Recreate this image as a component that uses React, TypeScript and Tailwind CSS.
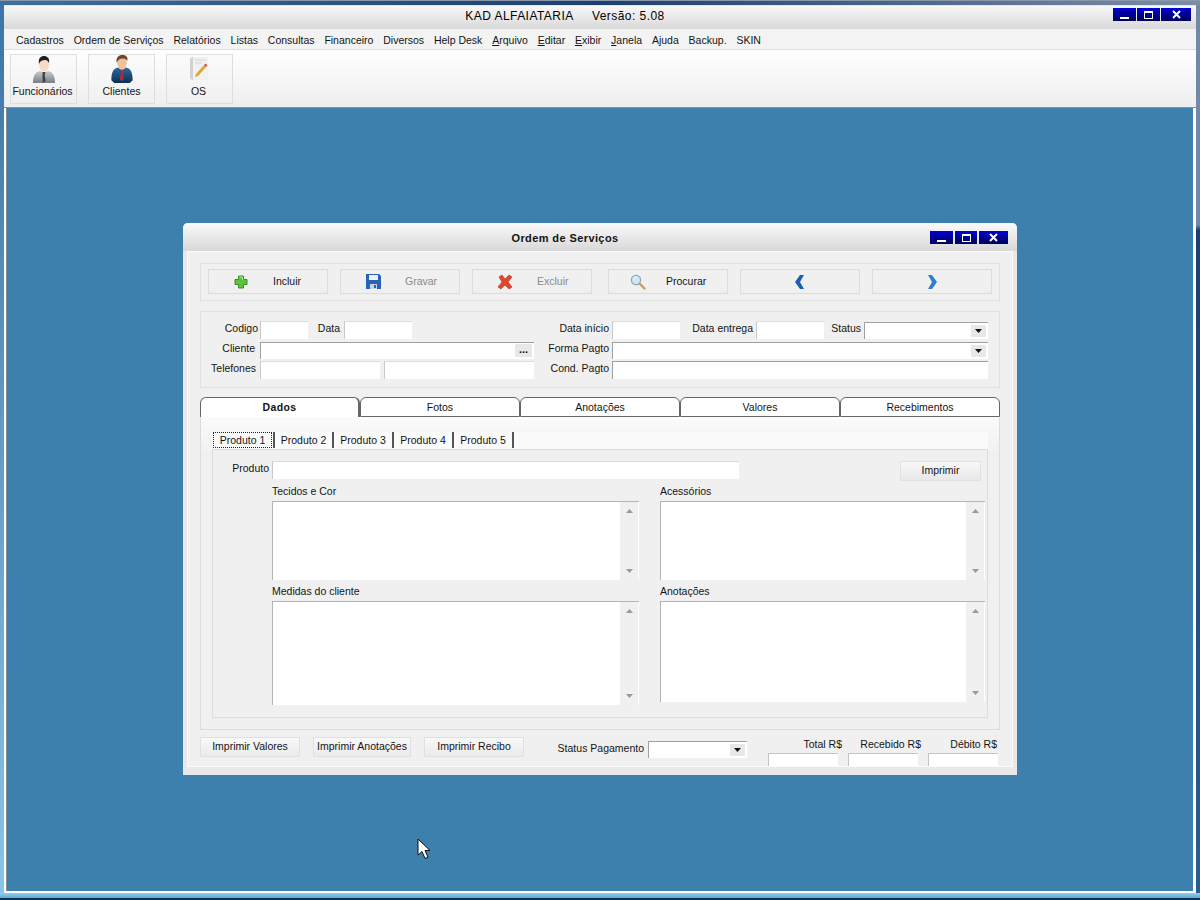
import React from 'react';

const FONT = "font-['Liberation_Sans',Arial,sans-serif]";

const WinButtons = ({ small }: { small?: boolean }) => (
  <div className={small ? 'flex gap-[2px]' : 'flex gap-[1px]'}>
    <div className="w-[23px] h-[13px] bg-gradient-to-b from-[#0000d8] to-[#000058] flex items-end justify-center pb-[2px]">
      <div className="w-[9px] h-[2px] bg-white"></div>
    </div>
    <div className={`${small ? 'w-[22px]' : 'w-[23px]'} h-[13px] bg-gradient-to-b from-[#0000d8] to-[#000058] flex items-center justify-center`}>
      <div className="w-[9px] h-[8px] border border-white border-t-2"></div>
    </div>
    <div className={`${small ? 'w-[29px]' : 'w-[30px]'} h-[13px] bg-gradient-to-b from-[#0000d8] to-[#000058] flex items-center justify-center`}>
      <svg width="9" height="9" viewBox="0 0 9 9"><path d="M1 1l7 7M8 1L1 8" stroke="#fff" strokeWidth="2" /></svg>
    </div>
  </div>
);

const PersonGrey = () => (
  <svg width="22" height="28" viewBox="0 0 22 28">
    <defs>
      <linearGradient id="suitg" x1="0" y1="0" x2="0" y2="1"><stop offset="0" stopColor="#c8cccc" /><stop offset="1" stopColor="#7b7f80" /></linearGradient>
    </defs>
    <path d="M0 27c0-7 2-11 7-12l4 2 4-2c5 1 7 5 7 12z" fill="url(#suitg)" />
    <path d="M9.500 16h3l-.8 3 1 6-3 2-.2-8z" fill="#3d4448" />
    <ellipse cx="11" cy="8.500" rx="5" ry="7" fill="#fbd9c4" />
    <path d="M6 8C5 2 8 0 11 0c3 0 6 2 5 7-1-2-2-3-4-3-3 0-5 1-6 4z" fill="#22211f" />
  </svg>
);

const PersonBlue = () => (
  <svg width="22" height="29" viewBox="0 0 22 30">
    <defs>
      <linearGradient id="suitb" x1="0" y1="0" x2="0" y2="1"><stop offset="0" stopColor="#2a6a9e" /><stop offset="1" stopColor="#0d2f55" /></linearGradient>
    </defs>
    <path d="M0 26c0-8 2-12 7-13l4 3 4-3c5 1 7 5 7 13l-3 3H3z" fill="url(#suitb)" />
    <path d="M9.500 15h3l-.8 3 1 7-2 2-1.800-2 1-7z" fill="#b8263c" />
    <ellipse cx="11" cy="8" rx="5" ry="6.500" fill="#f0c09a" />
    <path d="M5.500 8C4.500 2 8 0 11 0c4 0 6.500 2 5.500 6-1-2-3-2.500-5-2.500-3 0-4.500 1.500-6 4.500z" fill="#6e4526" />
  </svg>
);

const NoteIcon = () => (
  <svg width="19" height="25" viewBox="0 0 19 25">
    <path d="M0 3l2-2h16v23H2l-2-2z" fill="#d2d2d0" />
    <path d="M3 1h15v23H3z" fill="#f1f1ef" />
    <path d="M5 4h11M5 7h7" stroke="#d5d5d5" strokeWidth="1" />
    <path d="M6 18l8-9 2 2-8 9-3 1z" fill="#e2a23a" />
    <path d="M14 9l1.500-1.500 2 2L16 11z" fill="#c8582f" />
  </svg>
);

const PlusIcon = () => (
  <svg width="14" height="14" viewBox="0 0 14 14">
    <path d="M4.500 1h5v3.500h3.500v5H9.500V13h-5V9.500H1v-5h3.500z" fill="#5cc43c" stroke="#3a8f2a" strokeWidth="1" />
    <path d="M5.500 2h3v3" fill="none" stroke="#a8ec88" strokeWidth="1" />
  </svg>
);

const SaveIcon = () => (
  <svg width="15" height="15" viewBox="0 0 15 15">
    <path d="M0 0h13l2 2v13H0z" fill="#2a62b8" />
    <path d="M3 1h9v5H3z" fill="#eef2f8" />
    <path d="M4 10h7v5H4z" fill="#c9d3e4" />
    <path d="M8 11h2v3H8z" fill="#2a62b8" />
  </svg>
);

const XIcon = () => (
  <svg width="16" height="16" viewBox="0 0 16 16">
    <path d="M2 3l3-2 3 4 4-4 3 2-4 5 4 5-3 2-4-4-4 4-3-2 4-5z" fill="#e2452e" stroke="#b52f1c" strokeWidth="0.6" />
  </svg>
);

const SearchIcon = () => (
  <svg width="16" height="16" viewBox="0 0 16 16">
    <path d="M9.500 9.500l5 5" stroke="#cf9a55" strokeWidth="2.400" strokeLinecap="round" />
    <circle cx="6" cy="6" r="4.600" fill="#cfe6f5" stroke="#8fa9ba" strokeWidth="1.300" />
    <path d="M3.500 5.500c.5-1.500 1.500-2 3-2" stroke="#fff" strokeWidth="1" fill="none" />
  </svg>
);

const Chevron = ({ right }: { right?: boolean }) => (
  <svg width="12" height="14" viewBox="0 0 12 14">
    <path d={right ? 'M2 0h4l5 7-5 7H2l4-7z' : 'M10 0H6L1 7l5 7h4L6 7z'} fill={right ? '#2f7fd0' : '#1a5fb4'} />
  </svg>
);

const ToolButton = ({ label, children, iconClass, labelClass }: { label: string; children: React.ReactNode; iconClass?: string; labelClass?: string }) => (
  <div className="w-[67px] h-[50px] border border-[#dedede] bg-gradient-to-b from-[#fbfbfb] to-[#f0f0f0] flex flex-col items-center">
    <div className={`h-[29px] flex items-end justify-center ${iconClass ?? ''}`}>{children}</div>
    <div className={`leading-[14px] whitespace-nowrap ${labelClass ?? ''}`}>{label}</div>
  </div>
);

const ActionButton = ({ label, disabled, icon, iconClass, labelClass }: { label?: string; disabled?: boolean; icon: React.ReactNode; iconClass?: string; labelClass?: string }) => (
  <div className="w-[120px] h-[25px] border border-[#dcdcdc] bg-[#f0f0f0] flex items-center">
    {label ? (
      <>
        <div className={iconClass}>{icon}</div>
        <span className={`${labelClass} ${disabled ? 'text-[#8a8a8a]' : ''}`}>{label}</span>
      </>
    ) : (
      <div className="w-full flex justify-center">{icon}</div>
    )}
  </div>
);

const Label = ({ text, className }: { text: string; className: string }) => (
  <div className={`${className} text-right whitespace-nowrap leading-[14px] mt-[-5px]`}>{text}</div>
);

const Input = ({ className, dark }: { className: string; dark?: boolean }) => (
  <div className={`${className} h-[18px] bg-white border-l ${dark ? 'border-t border-[#a0a0a0]' : 'border-l-[#c8c8c8] border-t border-t-[#dcdcdc]'}`}></div>
);

const Combo = ({ className }: { className: string }) => (
  <div className={`${className} h-[17px] bg-white border-t border-l border-[#a0a0a0] flex items-center justify-end pr-[2px]`}>
    <div className="w-[15px] h-[12px] bg-[#e8e8e8] flex items-center justify-center">
      <svg width="7" height="4" viewBox="0 0 7 4"><path d="M0 0h7L3.500 4z" fill="#111" /></svg>
    </div>
  </div>
);

const Scrollbar = () => (
  <div className="w-[18px] h-full bg-[#f0f0f0] flex flex-col justify-between items-center py-[7px]">
    <svg width="7" height="4" viewBox="0 0 7 4"><path d="M0 4h7L3.500 0z" fill="#999" /></svg>
    <svg width="7" height="4" viewBox="0 0 7 4"><path d="M0 0h7L3.500 4z" fill="#999" /></svg>
  </div>
);

const Memo = ({ className }: { className: string }) => (
  <div className={`${className} bg-white border-t border-l border-[#b4b4b4] flex justify-end pr-[1px]`}>
    <Scrollbar />
  </div>
);

const MainTab = ({ label, active }: { label: string; active?: boolean }) => (
  <div className={`w-[160px] h-[20px] rounded-t-[6px] border-t border-r border-l flex items-center justify-center pt-[1px] ${active ? 'border-[#666] border-r-2 bg-white font-bold tracking-[0.4px]' : 'border-[#666] border-b bg-white'}`}>
    {label}
  </div>
);

const SubTab = ({ label, className }: { label: string; className: string }) => (
  <div className={`${className} h-[16px] border-r-2 border-[#555] flex items-center justify-center leading-[14px]`}>{label}</div>
);

const menus: [string, string][] = [
  ['', 'Cadastros'],
  ['', 'Ordem de Serviços'],
  ['', 'Relatórios'],
  ['', 'Listas'],
  ['', 'Consultas'],
  ['', 'Financeiro'],
  ['', 'Diversos'],
  ['', 'Help Desk'],
  ['A', 'rquivo'],
  ['E', 'ditar'],
  ['E', 'xibir'],
  ['J', 'anela'],
  ['', 'Ajuda'],
  ['', 'Backup.'],
  ['', 'SKIN'],
];

const OrdemWindow = () => (
  <div className="absolute left-[176px] top-[115px] w-[834px] h-[552px] rounded-t-[5px] bg-[#e8e8e8] overflow-hidden flex flex-col">
    <div className="h-[28px] shrink-0 relative bg-gradient-to-b from-[#fafafa] to-[#d8d8d8] flex items-center justify-center pr-[70px] pt-[2px]">
      <span className="font-bold text-[11px] tracking-[0.4px]">Ordem de Serviços</span>
      <div className="absolute right-[9px] top-[8px]"><WinButtons small /></div>
    </div>

    <div className="mx-[4px] h-[516px] border border-[#fbfbfb] bg-[#f0f0f0] px-[12px] pt-[11px] overflow-hidden">
      {/* barra de botoes */}
      <div className="h-[38px] border border-[#e0e0e0] px-[7px] pt-[5px] flex">
        <ActionButton label="Incluir" icon={<PlusIcon />} iconClass="ml-[25px] w-[14px]" labelClass="ml-[25px]" />
        <div className="ml-[12px]"><ActionButton label="Gravar" disabled icon={<SaveIcon />} iconClass="ml-[25px] w-[15px]" labelClass="ml-[24px]" /></div>
        <div className="ml-[12px]"><ActionButton label="Excluir" disabled icon={<XIcon />} iconClass="ml-[24px] w-[16px]" labelClass="ml-[24px]" /></div>
        <div className="ml-[16px]"><ActionButton label="Procurar" icon={<SearchIcon />} iconClass="ml-[21px] w-[16px]" labelClass="ml-[20px]" /></div>
        <div className="ml-[12px]"><ActionButton icon={<Chevron />} /></div>
        <div className="ml-[12px]"><ActionButton icon={<Chevron right />} /></div>
      </div>

      {/* dados da OS */}
      <div className="mt-[10px] h-[77px] border border-[#e0e0e0] pt-[9px] flex flex-col gap-[2px]">
        <div className="flex items-center h-[18px]">
          <Label text="Codigo" className="w-[57px]" />
          <Input className="ml-[2px] w-[48px]" />
          <Label text="Data" className="w-[32px]" />
          <Input className="ml-[4px] w-[68px]" />
          <Label text="Data início" className="w-[197px]" />
          <Input className="ml-[3px] w-[68px]" />
          <Label text="Data entrega" className="w-[73px]" />
          <Input className="ml-[3px] w-[68px]" />
          <Label text="Status" className="w-[37px]" />
          <Combo className="ml-[3px] w-[124px]" />
        </div>
        <div className="flex items-center h-[18px]">
          <Label text="Cliente" className="w-[54px]" />
          <div className="ml-[5px] w-[274px] h-[17px] bg-white border-t border-l border-[#a0a0a0] flex items-center justify-end pr-[2px]">
            <div className="w-[17px] h-[13px] bg-[#e8e8e8] text-center text-[11px] font-bold leading-[10px]">...</div>
          </div>
          <Label text="Forma Pagto" className="w-[75px]" />
          <Combo className="ml-[3px] w-[376px]" />
        </div>
        <div className="flex items-center h-[18px]">
          <Label text="Telefones" className="w-[55px]" />
          <Input className="ml-[4px] w-[120px]" />
          <Input className="ml-[4px] w-[150px]" />
          <Label text="Cond. Pagto" className="w-[75px]" />
          <Input className="ml-[3px] w-[376px]" dark />
        </div>
      </div>

      {/* abas */}
      <div className="mt-[9px] flex">
        <MainTab label="Dados" active />
        <MainTab label="Fotos" />
        <MainTab label="Anotações" />
        <MainTab label="Valores" />
        <MainTab label="Recebimentos" />
      </div>
      <div className="h-[313px] border-x border-b border-[#dcdcdc] bg-gradient-to-b from-[#fbfbfb] to-[#f0f0f0] to-[12%] px-[11px] pt-[15px]">
        <div className="flex pl-[1px] h-[17px] bg-[#fafafa]">
          <div className="h-[16px] w-[62px] border-r-2 border-[#555] flex items-center">
            <div className="w-[59px] h-[16px] border border-dotted border-[#222] flex items-center justify-center leading-[14px]">Produto 1</div>
          </div>
          <SubTab label="Produto 2" className="w-[59px]" />
          <SubTab label="Produto 3" className="w-[60px]" />
          <SubTab label="Produto 4" className="w-[60px]" />
          <SubTab label="Produto 5" className="w-[60px]" />
        </div>
        <div className="h-[269px] border border-[#dcdcdc] bg-[#f0f0f0] pt-[11px]">
          <div className="flex h-[20px]">
            <Label text="Produto" className="w-[56px] pt-[5px]" />
            <Input className="ml-[3px] w-[467px]" />
            <div className="ml-[161px] w-[81px] h-[20px] border border-[#e0e0e0] bg-gradient-to-b from-[#f8f8f8] to-[#e8e8e8] flex items-center justify-center">Imprimir</div>
          </div>
          <div className="flex pl-[59px]">
            <div className="w-[367px] flex flex-col">
              <div className="h-[20px] leading-[21px]">Tecidos e Cor</div>
              <Memo className="h-[79px]" />
              <div className="h-[21px] leading-[23px]">Medidas do cliente</div>
              <Memo className="h-[104px]" />
            </div>
            <div className="ml-[21px] w-[325px] flex flex-col">
              <div className="h-[20px] leading-[21px]">Acessórios</div>
              <Memo className="h-[79px]" />
              <div className="h-[21px] leading-[23px]">Anotações</div>
              <Memo className="h-[101px]" />
            </div>
          </div>
        </div>
      </div>

      {/* rodape */}
      <div className="mt-[7px] flex h-[30px]">
        <div className="w-[100px] h-[20px] border border-[#e0e0e0] bg-gradient-to-b from-[#f8f8f8] to-[#ebebeb] flex items-center justify-center">Imprimir Valores</div>
        <div className="ml-[13px] w-[98px] h-[20px] border border-[#e0e0e0] bg-gradient-to-b from-[#f8f8f8] to-[#ebebeb] flex items-center justify-center whitespace-nowrap">Imprimir Anotações</div>
        <div className="ml-[13px] w-[100px] h-[20px] border border-[#e0e0e0] bg-gradient-to-b from-[#f8f8f8] to-[#ebebeb] flex items-center justify-center">Imprimir Recibo</div>
        <div className="ml-[32px] w-[88px] mt-[4px] text-right whitespace-nowrap leading-[14px]">Status Pagamento</div>
        <Combo className="ml-[4px] mt-[4px] w-[99px]" />
        <div className="ml-[21px] w-[70px] flex flex-col">
          <div className="h-[16px] text-right leading-[14px] mr-[-4px]">Total R$</div>
          <div className="h-[14px] bg-white border-t border-l border-[#c4c4c4]"></div>
        </div>
        <div className="ml-[10px] w-[70px] flex flex-col">
          <div className="h-[16px] text-right leading-[14px] mr-[-3px]">Recebido R$</div>
          <div className="h-[14px] bg-white border-t border-l border-[#c4c4c4]"></div>
        </div>
        <div className="ml-[10px] w-[70px] flex flex-col">
          <div className="h-[16px] text-right leading-[14px] pr-[1px]">Débito R$</div>
          <div className="h-[14px] bg-white border-t border-l border-[#c4c4c4]"></div>
        </div>
      </div>
    </div>
  </div>
);

export default function App() {
  return (
    <div className={`${FONT} relative w-[1200px] h-[900px] overflow-hidden flex flex-col text-[10.5px] text-[#141414] bg-[#2a4f80]`}>
      <div className="h-[5px] shrink-0 bg-gradient-to-r from-[#3d6f9f] via-[#1c3f70] to-[#7c8ea8] border-t border-[#8a98aa]"></div>
      <div className="flex-1 flex min-h-0">
        <div className="w-[4px] bg-gradient-to-b from-[#3f74a8] to-[#86c6e8]"></div>
        <div className="flex-1 flex flex-col bg-[#f4f4f4] border-t border-[#dfe6ee]">
          <div className="h-[23px] shrink-0 relative bg-gradient-to-b from-[#f8f8f8] to-[#d9d9d9] flex items-center justify-center pr-[70px] pb-[4px]">
            <span className="text-[12px] tracking-[0.45px] text-black whitespace-pre">KAD ALFAIATARIA     Versão: 5.08</span>
            <div className="absolute right-[5px] top-[2px]"><WinButtons /></div>
          </div>
          <div className="h-[21px] shrink-0 bg-[#f3f3f3] border-b border-[#dedede] flex items-center pl-[12px] pt-[3px] gap-[9.85px]">
            {menus.map(([u, rest]) => (
              <div key={u + rest} className="whitespace-nowrap">
                {u ? <span className="underline">{u}</span> : null}{rest}
              </div>
            ))}
          </div>
          <div className="h-[58px] shrink-0 border-b border-[#8c8c8c] bg-gradient-to-b from-[#ffffff] to-[#eeeeee] flex gap-[11px] pl-[6px] pt-[4px]">
            <ToolButton label="Funcionários" labelClass="mr-[2px]"><PersonGrey /></ToolButton>
            <ToolButton label="Clientes"><PersonBlue /></ToolButton>
            <ToolButton label="OS" iconClass="pb-[3px]" labelClass="mr-[2px]"><NoteIcon /></ToolButton>
          </div>
          <div className="flex-1 flex min-h-0 pl-[2px] pr-[3px] pb-[2px] bg-white">
            <div className="flex-1 relative bg-[#3d80ad] border-l border-[#7f8f9a]">
              <OrdemWindow />
            </div>
          </div>
        </div>
        <div className="w-[4px] bg-[linear-gradient(to_bottom,#7288a8_0,#7288a8_220px,#1f3f72_225px,#2a5c92_100%)]"></div>
      </div>
      <div className="h-[7px] shrink-0 bg-gradient-to-b from-[#8fd0f0] to-[#5fa8d8] border-b-2 border-[#16304f]"></div>
      {/* ponteiro do mouse */}
      <svg className="absolute left-[417px] top-[838px]" width="14" height="22" viewBox="0 0 14 22">
        <path d="M1 1v16l4-3.500 3 7 3-1.300-3-6.700h5z" fill="#fff" stroke="#111" strokeWidth="1" />
      </svg>
    </div>
  );
}
